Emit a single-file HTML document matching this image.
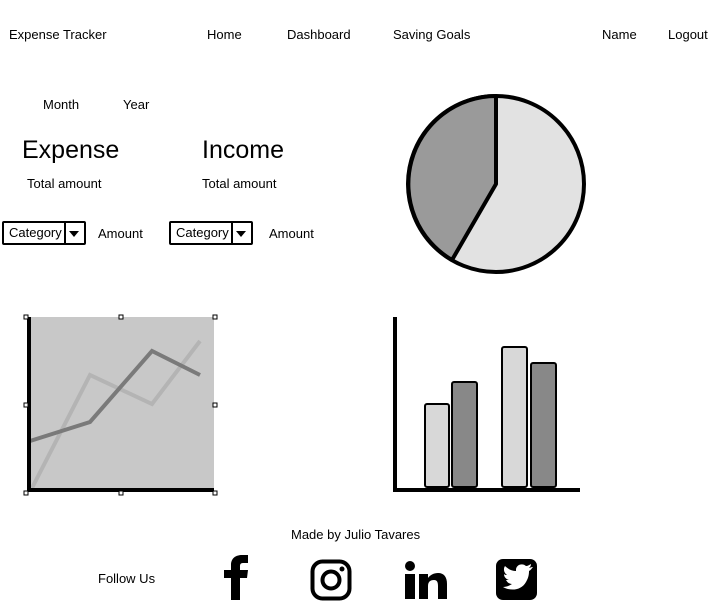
<!DOCTYPE html>
<html><head><style>
body{margin:0;width:726px;height:616px;background:#fff;font-family:"Liberation Sans",sans-serif;color:#000;position:relative;overflow:hidden}
.t{position:absolute;font-size:13px;white-space:nowrap}
.h{position:absolute;font-size:25px;white-space:nowrap}
.sel{position:absolute;height:24px;border:2px solid #000;border-radius:2px;box-sizing:border-box;font-size:13px;line-height:20px;padding-left:5px;width:84px}
.sel:after{content:"";position:absolute;right:0;top:0;width:18px;height:20px;border-left:2px solid #000}
.sel i{position:absolute;right:5px;top:8px;border-left:5px solid transparent;border-right:5px solid transparent;border-top:6px solid #000}
</style></head><body>
<div class="t" style="left:9px;top:27px">Expense Tracker</div>
<div class="t" style="left:207px;top:27px">Home</div>
<div class="t" style="left:287px;top:27px">Dashboard</div>
<div class="t" style="left:393px;top:27px">Saving Goals</div>
<div class="t" style="left:602px;top:27px">Name</div>
<div class="t" style="left:668px;top:27px">Logout</div>
<div class="t" style="left:43px;top:97px">Month</div>
<div class="t" style="left:123px;top:97px">Year</div>
<div class="h" style="left:22px;top:136px">Expense</div>
<div class="h" style="left:202px;top:136px">Income</div>
<div class="t" style="left:27px;top:176px">Total amount</div>
<div class="t" style="left:202px;top:176px">Total amount</div>
<div class="sel" style="left:2px;top:221px">Category<i></i></div>
<div class="t" style="left:98px;top:226px">Amount</div>
<div class="sel" style="left:169px;top:221px">Category<i></i></div>
<div class="t" style="left:269px;top:226px">Amount</div>
<div class="t" style="left:291px;top:527px">Made by Julio Tavares</div>
<div class="t" style="left:98px;top:571px">Follow Us</div>
<svg width="726" height="616" style="position:absolute;left:0;top:0">
<circle cx="496" cy="184" r="88" fill="#e2e2e2" stroke="#000" stroke-width="4"/>
<path d="M496 184 L496 96 A88 88 0 0 0 452 260 Z" fill="#9a9a9a" stroke="#000" stroke-width="4" stroke-linejoin="round"/>
<rect x="28" y="317" width="186" height="173" fill="#c8c8c8"/>
<polyline points="32,488 90,375 152,404 200,341" fill="none" stroke="#b4b4b4" stroke-width="4"/>
<polyline points="30,441 90,422 152,351 200,375" fill="none" stroke="#7a7a7a" stroke-width="4"/>
<path d="M29 317 V490 H214" fill="none" stroke="#000" stroke-width="4"/>
<g fill="#fff" stroke="#000" stroke-width="1">
<rect x="24" y="315" width="4" height="4"/><rect x="119" y="315" width="4" height="4"/><rect x="213" y="315" width="4" height="4"/>
<rect x="24" y="403" width="4" height="4"/><rect x="213" y="403" width="4" height="4"/>
<rect x="24" y="491" width="4" height="4"/><rect x="119" y="491" width="4" height="4"/><rect x="213" y="491" width="4" height="4"/>
</g>
<path d="M395 317 V490 H580" fill="none" stroke="#000" stroke-width="4"/>
<g stroke="#000" stroke-width="2">
<rect x="425" y="404" width="24" height="83" rx="2" fill="#d8d8d8"/>
<rect x="452" y="382" width="25" height="105" rx="2" fill="#888"/>
<rect x="502" y="347" width="25" height="140" rx="2" fill="#d8d8d8"/>
<rect x="531" y="363" width="25" height="124" rx="2" fill="#888"/>
</g>
<path d="M231 600 V578 H224 V570 H231 V565 C231 558 236 555 242 555 H248 V563 H243 C240 563 240 565 240 567 V570 H248 L247 578 H240 V600 Z" fill="#000"/>
<rect x="312.5" y="561.5" width="37" height="37" rx="10" fill="none" stroke="#000" stroke-width="4"/>
<circle cx="331" cy="580" r="8.5" fill="none" stroke="#000" stroke-width="4"/>
<circle cx="342" cy="569" r="2.5" fill="#000"/>
<circle cx="410" cy="566" r="5" fill="#000"/>
<rect x="405" y="574" width="10" height="25" fill="#000"/>
<path d="M419 599 V574 H428 V578 C430 575 434 573 438 573 C444 573 447 577 447 584 V599 H438 V586 C438 582 437 580 434 580 C430 580 428 582 428 586 V599 Z" fill="#000"/>
<rect x="496" y="559" width="41" height="41" rx="7" fill="#000"/>
<path d="M503 587 C510 591 521 591 526 582 C529 577 529 573 529 571 C531 570 532 568 533 567 C531 567 530 568 529 568 C530 567 531 566 531 564 C529 565 528 566 526 566 C523 563 517 564 516 569 C516 570 516 571 516 571 C512 571 508 569 505 566 C503 569 504 573 507 575 C506 575 505 575 504 574 C504 577 506 579 509 580 C508 580 507 580 506 580 C507 582 509 584 512 584 C509 586 506 587 503 587 Z" fill="#fff"/>
</svg>
</body></html>
